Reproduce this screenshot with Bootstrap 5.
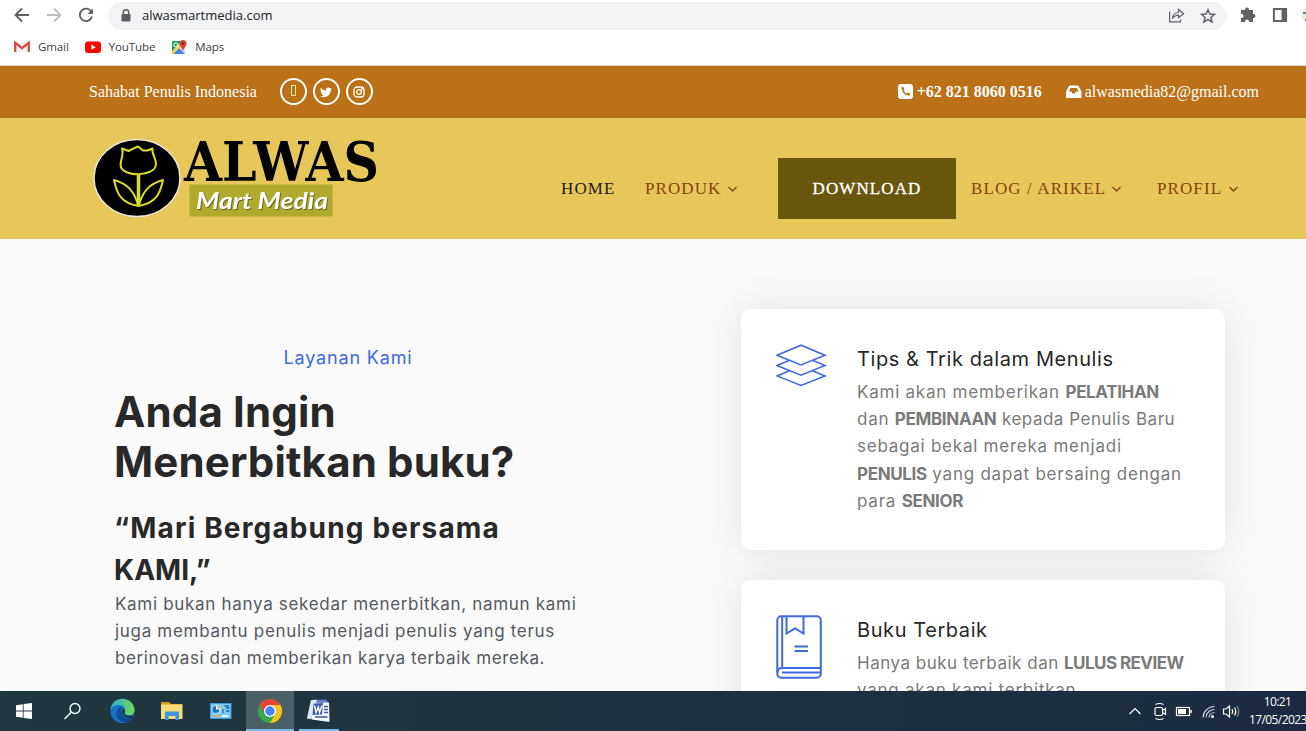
<!DOCTYPE html>
<html lang="id">
  <head>
    <meta charset="UTF-8" />
    <meta name="viewport" content="width=device-width, initial-scale=1" />
    <title>Alwas Mart Media</title>
    <link
      href="https://cdn.jsdelivr.net/npm/bootstrap@5.3.0/dist/css/bootstrap.min.css"
      rel="stylesheet"
    />
    <style>
      body {
        height: 731px;
        width: 1306px;
        overflow: hidden;
        background: #fafafa;
        font-family: "Inter", sans-serif;
      }

      svg {
        display: block;
        flex-shrink: 0;
      }

      /* browser bar */
      .browser {
        height: 66px;
        background: #fff;
        border-bottom: 1px solid #d9dadc;
        font-family: "Open Sans", sans-serif;
        color: #3c4043;
      }
      .toolbar-row { height: 30px; }
      .address {
        width: 1118px;
        height: 28px;
        margin-top: 1px;
        border-radius: 14px;
        background: #f1f3f4;
        font-size: 13px;
        color: #202124;
      }
      .bookmarks { height: 34px; font-size: 11.5px; letter-spacing: -0.1px; }

      /* orange strip */
      .topline {
        height: 52px;
        padding: 0 47px 0 89px;
        background: #bb7118;
        color: #fff;
        font-family: "Liberation Serif", serif;
        font-size: 16px;
      }
      .socials { gap: 6px; margin-left: 23px; padding-bottom: 1px; }
      .social {
        width: 27px;
        height: 27px;
        border: 2px solid #fff;
      }
      .missing-glyph { width: 5px; height: 11px; border: 1px solid #fbe7a5; margin-bottom: 2px; }

      /* main menu */
      .mainmenu {
        height: 121px;
        padding: 0 68px 0 90px;
        background: #e7c759;
        color: #85430c;
        font-family: "Liberation Serif", serif;
        font-size: 17px;
        letter-spacing: 1.1px;
      }
      .mainmenu ul { height: 61px; margin-top: 40px; }
      .m-home { width: 84px; color: #1c1c1c; }
      .m-produk { width: 133px; }
      .m-download {
        width: 178px;
        height: 61px;
        margin-right: 15px;
        background: #69560d;
        color: #fff;
        -webkit-text-stroke: 0.3px #fff;
      }
      .m-blog { width: 186px; }
      .m-profil { width: 81px; }
      .logo-name { font: 700 54px "DejaVu Serif", serif; letter-spacing: 0; }
      .logo-sub {
        font: italic 700 23px "Lato", sans-serif;
        letter-spacing: 0;
        filter: drop-shadow(1.5px 1.5px 0 #6a6720);
      }

      /* content */
      .content { height: 452px; }
      .intro { width: 466px; margin-left: 115px; padding-top: 105px; color: #282828; }
      .tagline { font-size: 18px; line-height: 28px; letter-spacing: 0.85px; color: #4169e1; margin-bottom: 15px; }
      .intro h1 { font-size: 42px; line-height: 50px; font-weight: 700; letter-spacing: 0.15px; margin: 0 0 20px -1px; }
      .intro h3 { font-size: 28px; line-height: 42px; font-weight: 700; letter-spacing: 1.15px; margin: 0 0 0 -1px; }
      .intro h3 span { letter-spacing: 0; }
      .intro p { font-size: 17px; line-height: 27.2px; letter-spacing: 0.69px; color: #54595f; white-space: nowrap; }
      .intro p span { letter-spacing: 0.61px; }
      .services { width: 484px; margin-left: 160px; padding-top: 70px; gap: 30px; }
      .service {
        height: 241px;
        padding: 35px;
        border-radius: 10px;
        background: #fff;
        box-shadow: 0 0 40px rgba(0, 0, 0, 0.1);
      }
      .service-icon { width: 81px; }
      .service h5 { font-size: 20px; line-height: 30px; font-weight: 400; letter-spacing: 0.58px; color: #282828; margin-bottom: 5px; }
      .service p { font-size: 17px; line-height: 27.2px; letter-spacing: 0.76px; color: #7a7a7a; white-space: nowrap; }
      .service b { letter-spacing: -0.35px; }
      .service .tighter { letter-spacing: 0.5px; }
      .service .tighter b { letter-spacing: -0.55px; }

      /* taskbar */
      .taskbar {
        height: 40px;
        background: linear-gradient(90deg, #20383f, #1f333f 40%, #1b2a42);
        color: #fff;
        font-family: "Open Sans", sans-serif;
        font-size: 12px;
        letter-spacing: -0.6px;
      }
      .task { width: 49px; height: 40px; }
      .task-open { width: 48px; margin-left: 1px; background: #4b5f65; border-bottom: 2px solid #76b9ed; }
      .task-word { width: 40px; margin-left: 5px; border-bottom: 2px solid #76b9ed; }
      .clock { width: 57px; line-height: 18px; padding-top: 2px; white-space: nowrap; }
    </style>
  </head>
  <body class="d-flex flex-column">
    <header class="browser flex-shrink-0">
      <div class="toolbar-row d-flex align-items-center">
        <svg width="108" height="30" fill="none" stroke="#5a5e63" stroke-width="1.8">
          <path d="M29 15H16M22 8.5L15.5 15L22 21.5" />
          <path d="M47 15H60M54 8.5L60.5 15L54 21.5" stroke="#bcbec1" />
          <path d="M91.3 11.6A6.2 6.2 0 1 0 92 16.5" />
          <path d="M93 8.5V14H87.5Z" fill="#5a5e63" stroke="none" />
        </svg>
        <div class="address d-flex align-items-center">
          <svg width="34" height="28">
            <rect x="13.5" y="12" width="9" height="7.5" rx="1" fill="#5a5e63" />
            <path d="M15.3 12.5V10.5a2.7 2.7 0 0 1 5.4 0V12.5" fill="none" stroke="#5a5e63" stroke-width="1.5" />
          </svg>
          <span>alwasmartmedia.com</span>
          <svg width="58" height="28" class="ms-auto" fill="none" stroke="#5f6368" stroke-width="1.2">
            <path d="M1.6 9.5V19.8H12.5V17.5M4.5 16.5C5 12.5 7.5 10.5 10.5 10.5V7.3L15.5 11.7L10.5 15.8V13.1C8 13.1 6 14.3 4.5 16.5Z" />
            <path d="M40 7.8L41.8 12L46.4 12.4L42.9 15.4L44 19.9L40 17.5L36 19.9L37.1 15.4L33.6 12.4L38.2 12Z" stroke-width="1.5" />
          </svg>
        </div>
        <svg width="80" height="30">
          <path d="M15 10H19V9.5a2 2 0 0 1 4 0V10H27V14H27.5a2 2 0 0 1 0 4H27V22H23V21.5a2 2 0 0 0-4 0V22H15V18H15.5a2 2 0 0 0 0-4H15Z" fill="#5f6368" />
          <rect x="47.9" y="9" width="12.2" height="12" fill="#fff" stroke="#5f6368" stroke-width="2" />
          <rect x="55.5" y="9" width="5" height="12" fill="#5f6368" />
          <circle cx="84" cy="15" r="8.5" fill="#e8f1d4" />
          <path d="M77 13h3M79 20h3" stroke="#18a5b5" stroke-width="2" />
        </svg>
      </div>
      <div class="bookmarks d-flex align-items-center">
        <svg width="38" height="30">
          <path d="M15 10H29V20H15Z" fill="#f1f1f1" />
          <path d="M15.2 20V10.8L22 16.2L28.8 10.8V20" fill="none" stroke="#d8483c" stroke-width="2.2" />
        </svg>
        <span>Gmail</span>
        <svg width="40" height="30">
          <rect x="16" y="9.5" width="16" height="11.5" rx="3" fill="#f00" />
          <path d="M22.3 12.6L26.8 15.2L22.3 17.8Z" fill="#fff" />
        </svg>
        <span>YouTube</span>
        <svg width="40" height="30">
          <path d="M17 9H30V22H17Z" fill="#e0e0e0" />
          <path d="M17 9H27L17 19.5Z" fill="#1fa463" />
          <path d="M17 22L23.5 15.5L30 22Z" fill="#4285f4" />
          <path d="M17 22V19.5L27 9.5L28.5 11.5L18.5 22Z" fill="#ffd04b" />
          <circle cx="20.7" cy="12.8" r="2" fill="none" stroke="#fff" />
          <path d="M28 20C28 16 24.5 15 24.5 11.5a3.5 3.5 0 0 1 7 0C31.5 15 28 16 28 20Z" fill="#dc4437" />
          <circle cx="28" cy="11.5" r="1.2" fill="#7b231e" />
        </svg>
        <span>Maps</span>
      </div>
    </header>

    <div class="topline d-flex align-items-center flex-shrink-0">
      <span>Sahabat Penulis Indonesia</span>
      <div class="socials d-flex">
        <span class="social rounded-circle d-flex align-items-center justify-content-center"><i class="missing-glyph"></i></span>
        <span class="social rounded-circle d-flex align-items-center justify-content-center">
          <svg width="12" height="12" viewBox="0 0 16 16" fill="#fff"><path d="M5.026 15c6.038 0 9.341-5.003 9.341-9.334 0-.14 0-.282-.006-.422A6.685 6.685 0 0 0 16 3.542a6.658 6.658 0 0 1-1.889.518 3.301 3.301 0 0 0 1.447-1.817 6.533 6.533 0 0 1-2.087.793A3.286 3.286 0 0 0 7.875 6.03a9.325 9.325 0 0 1-6.767-3.429 3.289 3.289 0 0 0 1.018 4.382A3.323 3.323 0 0 1 .64 6.575v.045a3.288 3.288 0 0 0 2.632 3.218 3.203 3.203 0 0 1-.865.115 3.23 3.23 0 0 1-.614-.057 3.283 3.283 0 0 0 3.067 2.277A6.588 6.588 0 0 1 .78 13.58a6.32 6.32 0 0 1-.78-.045A9.344 9.344 0 0 0 5.026 15z" /></svg>
        </span>
        <span class="social rounded-circle d-flex align-items-center justify-content-center">
          <svg width="12" height="12" fill="none" stroke="#fff" stroke-width="1.3"><rect x="1" y="1" width="10" height="10" rx="3" /><circle cx="6" cy="6" r="2.3" /><circle cx="8.9" cy="3.1" r=".4" /></svg>
        </span>
      </div>
      <div class="d-flex align-items-center ms-auto">
        <svg width="19" height="16"><rect width="15" height="15" rx="3" fill="#fff" /><path d="M3.5 3.2C3.5 8 7 11.5 11.8 11.5L12.2 9.5L9.9 8.6L9 9.6C7.3 8.9 6.2 7.8 5.5 6.2L6.4 5.2L5.6 2.9Z" fill="#bb7118" /></svg>
        <b>+62 821 8060 0516</b>
        <svg width="43" height="16"><path d="M24.5 7.5L27.5 2H36L39 7.5V13.5H24.5Z" fill="#fff" stroke="#fff" stroke-linejoin="round" /><path d="M27 7.5L28.5 4H35L36.5 7.5H34L33 9.5H30.5L29.5 7.5Z" fill="#bb7118" /></svg>
        <span>alwasmedia82@gmail.com</span>
      </div>
    </div>

    <nav class="mainmenu d-flex flex-shrink-0">
      <svg width="300" height="121">
        <ellipse cx="47" cy="60" rx="43" ry="38.5" fill="#000" stroke="#e9e6da" stroke-width="1.5" />
        <!-- tulip -->
        <g fill="none" stroke="#d9dc22" stroke-width="2" stroke-linejoin="round">
          <path d="M32 30.5L38.5 33L42.5 31L48 28.5L53 32.5L57.5 32.5L62.5 30.5C61.5 38 68 42 65.5 48.5C62 58 36 59 31 49.5C29 43 34.5 38 32 30.5Z" />
          <path d="M48.5 56V88" stroke-width="3.5" />
          <path d="M48.5 88C31 85 27 76 24 62C38 66 44 73 48.5 88ZM48.5 88C66 85 70 76 73 62C59 66 53 73 48.5 88Z" />
        </g>
        <text class="logo-name" x="94" y="62.5" textLength="195" lengthAdjust="spacingAndGlyphs">ALWAS</text>
        <rect x="99.5" y="66.5" width="143" height="32" fill="#b0ab2f" />
        <text class="logo-sub" x="106" y="90.5" textLength="132" lengthAdjust="spacingAndGlyphs" fill="#fff">Mart Media</text>
      </svg>
      <ul class="d-flex align-items-center list-unstyled mb-0 ms-auto">
        <li class="m-home">HOME</li>
        <li class="m-produk d-flex align-items-center">PRODUK<svg width="18" height="12" fill="none" stroke="#85430c" stroke-width="1.3"><path d="M6.5 4L10.5 8L14.5 4" /></svg></li>
        <li class="m-download d-flex align-items-center justify-content-center">DOWNLOAD</li>
        <li class="m-blog d-flex align-items-center">BLOG / ARIKEL<svg width="18" height="12" fill="none" stroke="#85430c" stroke-width="1.3"><path d="M6.5 4L10.5 8L14.5 4" /></svg></li>
        <li class="m-profil d-flex align-items-center">PROFIL<svg width="18" height="12" fill="none" stroke="#85430c" stroke-width="1.3"><path d="M7.5 4L11.5 8L15.5 4" /></svg></li>
      </ul>
    </nav>

    <main class="content d-flex overflow-hidden flex-shrink-0">
      <section class="intro flex-shrink-0">
        <div class="tagline text-center">Layanan Kami</div>
        <h1>Anda Ingin<br />Menerbitkan buku?</h1>
        <h3>“Mari Bergabung bersama<br /><span>KAMI,”</span></h3>
        <p class="mb-0">
          Kami bukan hanya sekedar menerbitkan, namun kami<br />
          juga membantu penulis menjadi penulis yang terus<br />
          <span>berinovasi dan memberikan karya terbaik mereka.</span>
        </p>
      </section>
      <section class="services d-flex flex-column flex-shrink-0">
        <div class="service d-flex flex-shrink-0">
          <div class="service-icon flex-shrink-0">
            <svg width="52" height="44" fill="none" stroke="#4169e1" stroke-width="1.6">
              <path d="M1 11.2L25 1.2L49 11.2L25 20.9ZM13.5 16.2L1 21.5L25 31.2L49 21.500L36.5 16.2M13.5 26.7L1 31.900L25 41.5L49 31.900L36.5 26.700" />
            </svg>
          </div>
          <div>
            <h5>Tips &amp; Trik dalam Menulis</h5>
            <p class="mb-0">
              Kami akan memberikan <b>PELATIHAN</b><br />
              dan <b>PEMBINAAN</b> <span class="tighter">kepada Penulis Baru</span><br />
              sebagai bekal mereka menjadi<br />
              <b>PENULIS</b> yang dapat bersaing dengan<br />
              para <b>SENIOR</b>
            </p>
          </div>
        </div>
        <div class="service d-flex flex-shrink-0">
          <div class="service-icon flex-shrink-0">
            <svg width="48" height="66" fill="none" stroke="#4169e1" stroke-width="2">
              <rect x="1.3" y="1.2" width="43.5" height="61.5" rx="4" />
              <path d="M6.2 1V53M10.5 2V18.5L19 13.5L27.5 18.5V2M18.5 31.5H32M18.5 36H32M1.5 57.5C1.5 54.5 3 53 6 53H44.5M6 57.5H44.5" />
            </svg>
          </div>
          <div>
            <h5>Buku Terbaik</h5>
            <p class="mb-0">
              <span class="tighter">Hanya buku terbaik dan <b>LULUS REVIEW</b></span><br />
              yang akan kami terbitkan
            </p>
          </div>
        </div>
      </section>
    </main>

    <footer class="taskbar d-flex flex-shrink-0">
      <div class="task">
        <svg width="49" height="40" fill="#fff"><path d="M16 14.2L22.8 13.2V19.6H16ZM23.6 13.1L32 12V19.6H23.6ZM16 20.4H22.8V26.8L16 25.8ZM23.6 20.4H32V28L23.6 26.9Z" /></svg>
      </div>
      <div class="task">
        <svg width="49" height="40" fill="none" stroke="#fff" stroke-width="1.4"><circle cx="26" cy="17.5" r="5" /><path d="M22.3 21.2L15.5 28" /></svg>
      </div>
      <div class="task">
        <svg width="49" height="40">
          <defs>
            <linearGradient id="edgeTop"><stop offset="0" stop-color="#2aa7dd" /><stop offset="1" stop-color="#6fdd52" /></linearGradient>
          </defs>
          <circle cx="24.5" cy="20" r="12" fill="#1272c4" />
          <path d="M12.6 19C13.5 3 36.5 5 36.5 19.5C36.5 25 28.5 25 26 23C29 18 26 14 21.5 14C17 14 13.5 16.5 12.6 19Z" fill="url(#edgeTop)" />
          <path d="M21.5 16.5C15 22 20 31.5 28 31.5C31 31 34 29 35 26.5C29 29 24 26.5 24 22C23 20 22 18.5 24 16Z" fill="#0d4a96" />
          <path d="M24 19C25 16.5 28.5 19 26.5 22.5C27.5 25 33 25.2 35.2 24.5L34.5 27C29 28.5 23.5 25 24 19Z" fill="#20383f" />
        </svg>
      </div>
      <div class="task">
        <svg width="49" height="40">
          <path d="M14 11H22L24 13H35V28H14Z" fill="#d99a18" />
          <rect x="14" y="13.5" width="21.5" height="14.5" fill="#fcd978" />
          <path d="M18 29V20.5H32V29H28.5V25H21.5V29Z" fill="#3a96dd" />
        </svg>
      </div>
      <div class="task">
        <svg width="49" height="40">
          <rect x="14.5" y="12.5" width="20.5" height="15" fill="#7ecbf5" stroke="#3b9bd9" />
          <circle cx="20.5" cy="18.5" r="4" fill="#fff" />
          <path d="M20 18.5V15a3.5 3.5 0 1 0 3.5 3.5Z" fill="#1976c5" />
          <path d="M21.3 17.5V14.5a3.5 3.5 0 0 1 3 3Z" fill="#f2a33a" />
          <path d="M27 22V18M30 17H33.5M30 20H33.5M28.5 15H33" stroke="#1570b8" stroke-width="1.3" />
          <path d="M17.5 25H24" stroke="#f2a33a" stroke-width="1.5" /><path d="M26 25H32" stroke="#fff" stroke-width="1.5" />
        </svg>
      </div>
      <div class="task task-open">
        <svg width="48" height="38">
          <circle cx="24" cy="20" r="12" fill="#34a853" />
          <path d="M24 14H34.4A12 12 0 0 1 24 32L29.2 23Z" fill="#fbc116" />
          <path d="M13.6 14L18.8 23L24 20V14H34.4A12 12 0 0 0 13.6 14Z" fill="#ea4335" />
          <circle cx="24" cy="20" r="6" fill="#fff" />
          <circle cx="24" cy="20" r="4.7" fill="#4285f4" />
        </svg>
      </div>
      <div class="task task-word">
        <svg width="40" height="38">
          <path d="M12 9L27 8.500L29 11V13H15L13 28L8 27.500Z" fill="#5d83c4" />
          <path d="M12 9L18 8.700L12 27.900L8 27.500Z" fill="#dfe8f5" />
          <path d="M14.500 12L30 11.500L30.500 31L12.500 28.500Z" fill="#f5f7fb" />
          <path d="M14.500 12.500L24 12L23 23.500L13.500 24Z" fill="#3b5ea6" />
          <path d="M25 15.500H29M25 18.500H29M25 21.500H29M16 26H28.500" stroke="#3c5b9d" stroke-width="1.300" />
          <path d="M15.500 14.500L17 21.500L19.300 16L20.500 21.500L23 14.500" fill="none" stroke="#fff" stroke-width="1.400" />
        </svg>
      </div>
      <svg width="124" height="40" class="ms-auto" fill="none" stroke="#fff" stroke-width="1.2">
        <path d="M4.5 23L10 17.500L15.500 23" />
        <rect x="30" y="16.5" width="7.5" height="8" rx="1.5" />
        <path d="M37.5 19.5L40.500 17.5V23.5L37.500 21.5M30.500 13.5Q34.500 11.5 38.500 13.5M30.500 27.5Q34.500 29.5 38.500 27.5" />
        <rect x="51.500" y="16.5" width="13" height="8" /><rect x="53" y="18" width="8" height="5" fill="#fff" stroke="none" /><path d="M66 19V22" stroke-width="1.5" />
        <path d="M78 26.5A11.5 11.5 0 0 1 89.5 15.5M81 26.5A8.5 8.5 0 0 1 89.5 18.5M84 26.5A5.5 5.5 0 0 1 89.5 21.5" stroke="#cdd1d8" />
        <circle cx="87.5" cy="25.5" r="1.5" fill="#fff" stroke="none" />
        <path d="M98.500 18V23H101L104.500 26V15L101 18ZM107 18Q108.5 20.5 107 23M109.5 16.5Q112 20.5 109.5 24.5" />
        <path d="M112 15Q115.5 20.5 112 26" stroke="#7d8796" />
      </svg>
      <div class="clock text-center">10:21<br />17/05/2023</div>
    </footer>

    <script src="https://cdn.jsdelivr.net/npm/bootstrap@5.3.0/dist/js/bootstrap.bundle.min.js"></script>
  </body>
</html>
